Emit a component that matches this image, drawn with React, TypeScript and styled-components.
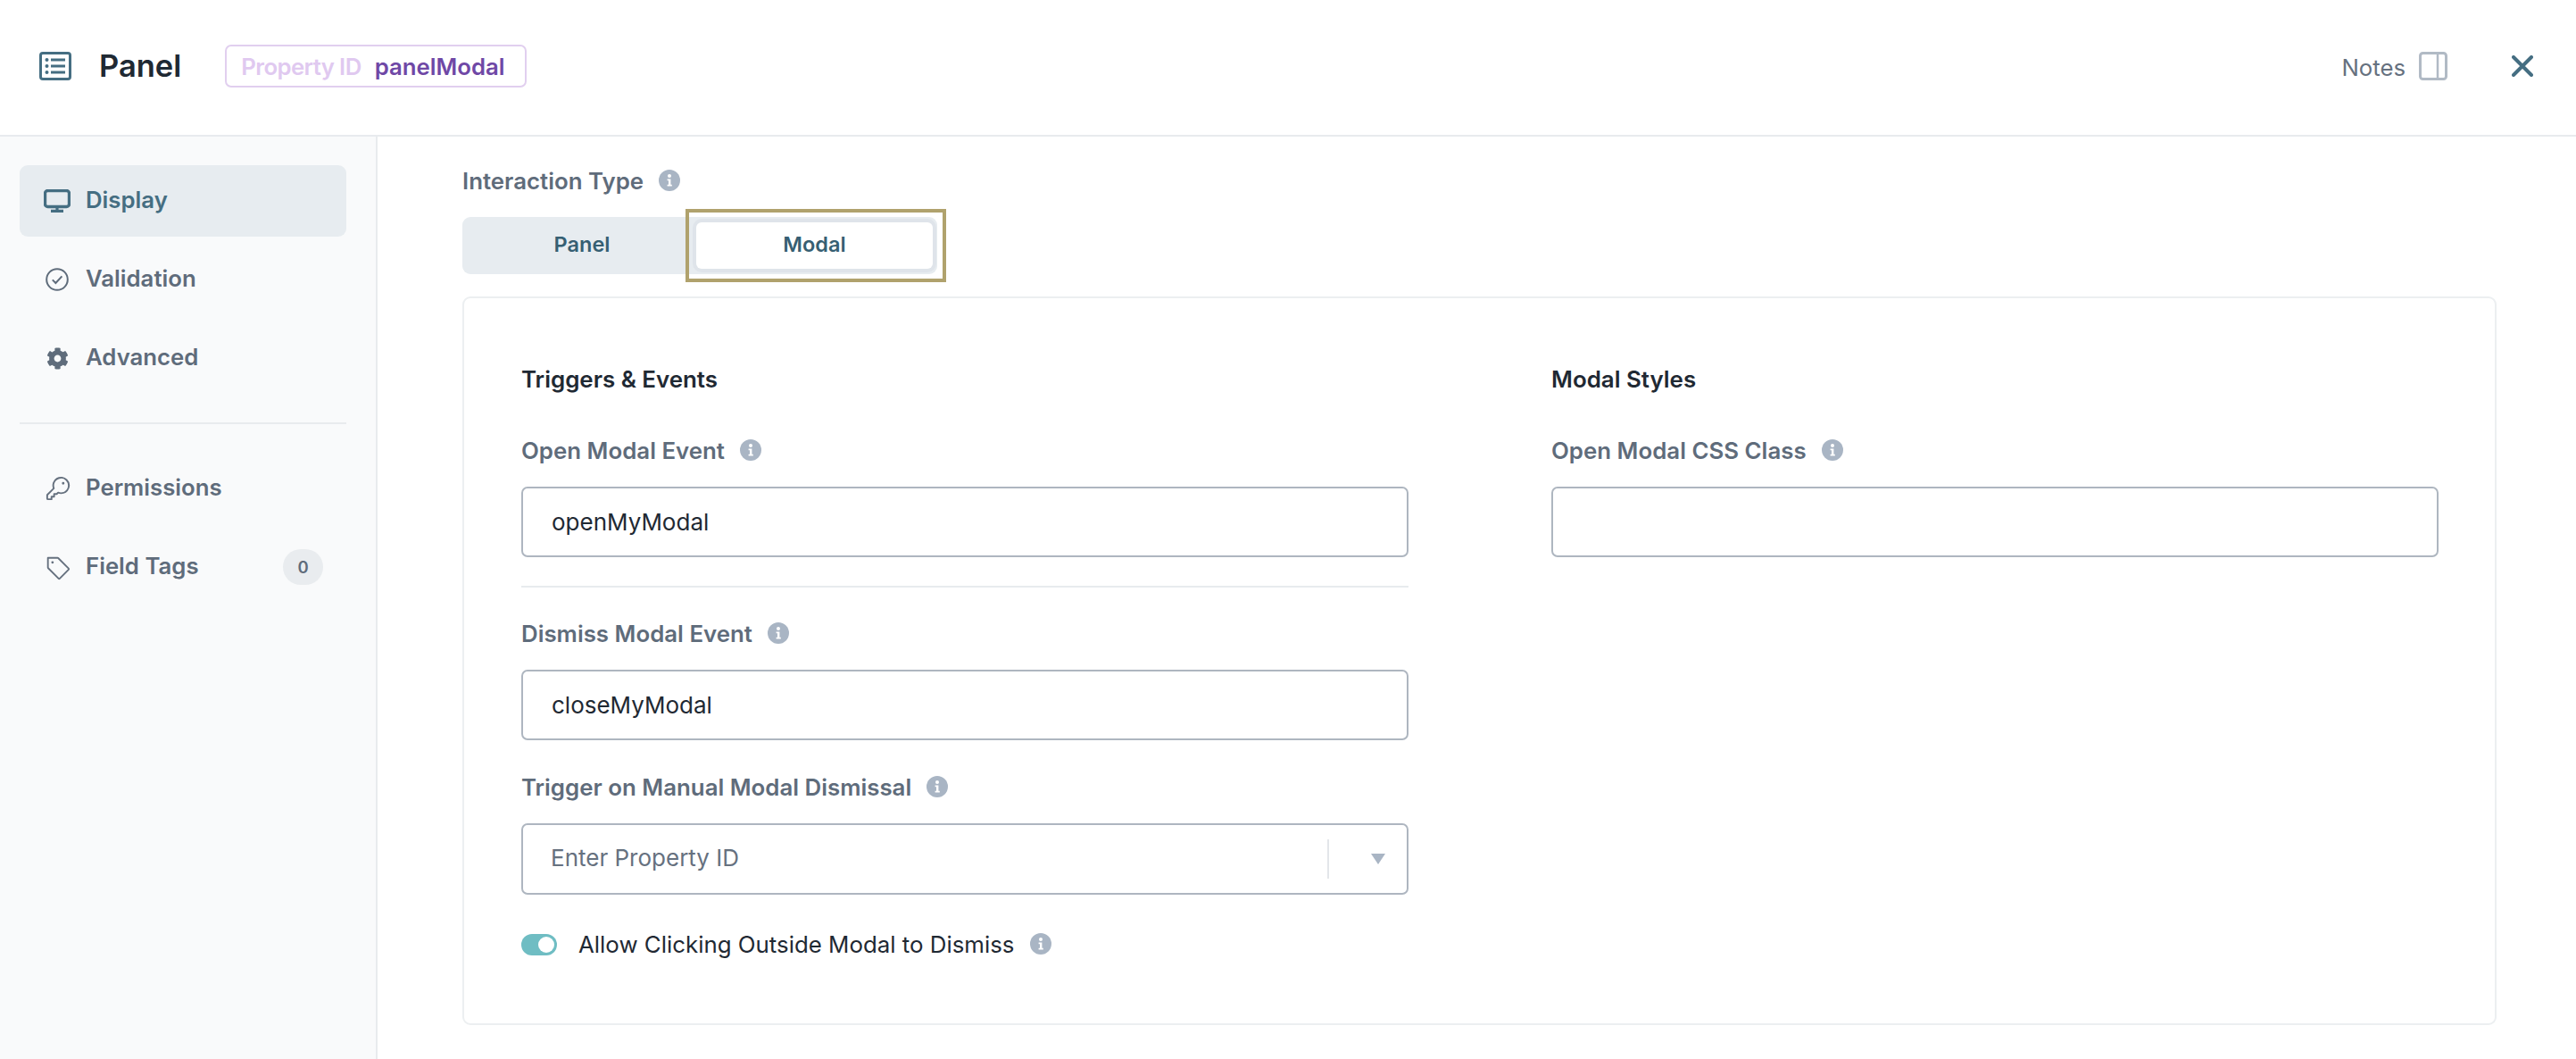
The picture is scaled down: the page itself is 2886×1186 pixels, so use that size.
import React from 'react'
import styled, { createGlobalStyle } from 'styled-components'
import { FaCog } from 'react-icons/fa'
import { PiKey, PiTag } from 'react-icons/pi'

const GlobalStyle = createGlobalStyle`
  html, body {
    margin: 0;
    padding: 0;
    background: #fff;
  }
  * {
    box-sizing: border-box;
  }
  body {
    font-family: Inter, "Liberation Sans", sans-serif;
    color: #1f2933;
  }
`

const Page = styled.div`
  width: 2886px;
  height: 1186px;
  overflow: hidden;
  display: flex;
  flex-direction: column;
`

const Header = styled.header`
  height: 153px;
  flex: none;
  display: flex;
  align-items: center;
  padding: 0 48px 3px 44px;
  border-bottom: 2px solid #e8ebee;
`

const Title = styled.h1`
  margin: 0 49px 0 31px;
  font-size: 34.5px;
  line-height: 44px;
  font-weight: 600;
  color: #1f2933;
`

const PropertyBadge = styled.div`
  height: 48px;
  width: 338px;
  display: flex;
  align-items: center;
  gap: 15px;
  padding: 0 0 0 16px;
  border: 2.5px solid #e1cfef;
  border-radius: 7px;
  font-size: 25.76px;
  font-weight: 600;
  white-space: nowrap;
`

const BadgeKey = styled.span`
  color: #e0c9f0;
  letter-spacing: -0.6px;
`

const BadgeValue = styled.span`
  color: #6f48a6;
`

const HeaderRight = styled.div`
  margin-left: auto;
  display: flex;
  align-items: center;
`

const NotesLabel = styled.span`
  font-size: 25.76px;
  color: #66717f;
  margin: 3px 15px 0 0;
`

const CloseButton = styled.div`
  margin-left: 72px;
  display: flex;
`

const Body = styled.div`
  flex: 1;
  display: flex;
  min-height: 0;
`

const Sidebar = styled.nav`
  width: 423px;
  flex: none;
  padding: 32px 33px 0 22px;
  background: #f9fafb;
  border-right: 2px solid #e8ebee;
  display: flex;
  flex-direction: column;
  gap: 8px;
`

const NavItem = styled.div<{ $active?: boolean }>`
  height: 80px;
  display: flex;
  align-items: center;
  gap: 16px;
  padding: 0 26px;
  border-radius: 9px;
  background: ${(p) => (p.$active ? '#e7ecf0' : 'transparent')};
  color: ${(p) => (p.$active ? '#456e82' : '#5f6c7b')};
  font-size: 25.76px;
  font-weight: 600;
`

const NavIcon = styled.span`
  width: 32px;
  height: 32px;
  flex: none;
  display: flex;
  align-items: center;
  justify-content: center;
`

const LineIcon = styled(NavIcon)`
  color: #66717f;
`

const NavText = styled.span`
  padding-bottom: 3px;
`

const CountBadge = styled.span`
  margin-left: auto;
  width: 45px;
  height: 40px;
  border-radius: 20px;
  background: #e9ecef;
  display: flex;
  align-items: center;
  justify-content: center;
  font-size: 18.5px;
  font-weight: 600;
`

const NavDivider = styled.hr`
  width: 100%;
  height: 2px;
  margin: 24px 0;
  border: 0;
  background: #e8ebee;
`

const Main = styled.main`
  flex: 1;
  min-width: 0;
  padding: 32px 89px 0 95px;
`

const LabelRow = styled.div<{ $dark?: boolean; $spaced?: boolean }>`
  height: 36px;
  margin-top: ${(p) => (p.$spaced ? '35px' : '0')};
  padding-bottom: 2px;
  display: flex;
  align-items: center;
  gap: 17px;
  font-size: 25.85px;
  font-weight: ${(p) => (p.$dark ? 400 : 600)};
  color: ${(p) => (p.$dark ? '#1f2933' : '#5f6c7b')};
`

const Tabs = styled.div`
  position: relative;
  width: 532px;
  height: 64px;
  margin: 22px 0 25px;
  padding: 6px 5px 6px 6px;
  display: flex;
  border-radius: 9px;
  background: #e7ecf0;
`

const Tab = styled.div<{ $active?: boolean }>`
  flex: none;
  width: ${(p) => (p.$active ? '265px' : '256px')};
  padding-bottom: 3px;
  display: flex;
  align-items: center;
  justify-content: center;
  border-radius: 6px;
  font-size: 23.5px;
  font-weight: 600;
  color: #365f73;
  background: ${(p) => (p.$active ? '#fff' : 'transparent')};
  box-shadow: ${(p) => (p.$active ? '0 0 0 4px #dfe4ea' : 'none')};
`

const Highlight = styled.div`
  position: absolute;
  top: -9px;
  left: 250px;
  width: 292px;
  height: 82px;
  border: 4px solid #b0a26d;
  pointer-events: none;
`

const Card = styled.section`
  height: 816px;
  padding: 73px 0 0 64px;
  border: 2px solid #eceff1;
  border-radius: 9px;
  display: grid;
  grid-template-columns: 994px 994px;
  column-gap: 160px;
  align-content: start;
  align-items: start;
`

const Column = styled.div`
  display: flex;
  flex-direction: column;
`

const SectionTitle = styled.h2`
  margin: 0 0 44px;
  font-size: 25.9px;
  line-height: 36px;
  font-weight: 600;
  color: #1f2933;
`

const TextInput = styled.input`
  display: block;
  width: 100%;
  height: 79px;
  margin-top: 22px;
  padding: 0 32px;
  border: 2px solid #aeb6c0;
  border-radius: 7px;
  background: #fff;
  font-family: inherit;
  font-size: 26px;
  color: #1f2933;
  outline: none;
`

const FieldDivider = styled.hr`
  width: 100%;
  height: 2px;
  margin: 32px 0 34px;
  border: 0;
  background: #e8ebee;
`

const SelectBox = styled.div`
  height: 80px;
  margin-top: 22px;
  display: flex;
  align-items: center;
  padding-left: 31px;
  border: 2px solid #aeb6c0;
  border-radius: 7px;
  font-size: 26px;
  color: #66717f;
`

const SelectText = styled.span`
  padding-bottom: 3px;
`

const SelectControl = styled.div`
  margin-left: auto;
  width: 89px;
  height: 44px;
  flex: none;
  display: flex;
  align-items: center;
  padding-left: 47px;
  border-left: 2px solid #e3e6ea;
`

const Caret = styled.span`
  width: 0;
  height: 0;
  border-left: 8px solid transparent;
  border-right: 8px solid transparent;
  border-top: 12px solid #a9b5c4;
`

const ToggleRow = styled.div`
  margin-top: 38px;
  display: flex;
  align-items: center;
  gap: 24px;
`

const Toggle = styled.span`
  width: 40px;
  height: 24px;
  flex: none;
  padding: 3px;
  display: flex;
  justify-content: flex-end;
  border-radius: 12px;
  background: #6fbdc3;
`

const ToggleKnob = styled.span`
  width: 18px;
  height: 18px;
  border-radius: 50%;
  background: #fff;
`

const InfoDot = styled.svg`
  width: 24px;
  height: 24px;
  flex: none;
`

const Info = () => (
  <InfoDot viewBox="0 0 24 24">
    <circle cx="12" cy="12" r="12" fill="#a9b5c4" />
    <circle cx="12" cy="7" r="2" fill="#fff" />
    <path d="M9.6 10.4h3.8v6.4h1.4v1.8H9.6v-1.8h1.4v-4.6H9.6z" fill="#fff" />
  </InfoDot>
)

const ListIcon = () => (
  <svg width="36" height="32" viewBox="0 0 36 32" fill="none">
    <rect x="1.5" y="1.5" width="33" height="29" rx="2.5" stroke="#456e82" strokeWidth="3" />
    <circle cx="8.5" cy="9" r="2" fill="#456e82" />
    <circle cx="8.5" cy="16" r="2" fill="#456e82" />
    <circle cx="8.5" cy="23" r="2" fill="#456e82" />
    <path d="M13 9h16M13 16h16M13 23h16" stroke="#456e82" strokeWidth="3" />
  </svg>
)

const PanelToggleIcon = () => (
  <svg width="32" height="32" viewBox="0 0 32 32" fill="none">
    <rect x="1.5" y="1.5" width="29" height="29" rx="3" stroke="#b1bac5" strokeWidth="3" />
    <path d="M21 2v28" stroke="#b1bac5" strokeWidth="2.5" />
  </svg>
)

const CloseIcon = () => (
  <svg width="24" height="24" viewBox="0 0 24 24" fill="none">
    <path d="M2 2l20 20M22 2L2 22" stroke="#456e82" strokeWidth="4" strokeLinecap="round" />
  </svg>
)

const MonitorIcon = () => (
  <svg width="30" height="26" viewBox="0 0 30 26" fill="none">
    <rect x="1.5" y="1.5" width="27" height="18" rx="3" stroke="#456e82" strokeWidth="3.4" />
    <path d="M15 20v4M8 24.4h14" stroke="#456e82" strokeWidth="3.2" />
  </svg>
)

const CheckCircleIcon = () => (
  <svg width="26" height="26" viewBox="0 0 26 26" fill="none">
    <circle cx="13" cy="13" r="11.8" stroke="#5f6c7b" strokeWidth="2" />
    <path d="M7.8 13.4l3.6 3.6 7-7.6" stroke="#5f6c7b" strokeWidth="2" />
  </svg>
)

export default function App() {
  return (
    <Page>
      <GlobalStyle />
      <Header>
        <ListIcon />
        <Title>Panel</Title>
        <PropertyBadge>
          <BadgeKey>Property ID</BadgeKey>
          <BadgeValue>panelModal</BadgeValue>
        </PropertyBadge>
        <HeaderRight>
          <NotesLabel>Notes</NotesLabel>
          <PanelToggleIcon />
          <CloseButton>
            <CloseIcon />
          </CloseButton>
        </HeaderRight>
      </Header>
      <Body>
        <Sidebar>
          <NavItem $active>
            <NavIcon>
              <MonitorIcon />
            </NavIcon>
            <NavText>Display</NavText>
          </NavItem>
          <NavItem>
            <NavIcon>
              <CheckCircleIcon />
            </NavIcon>
            <NavText>Validation</NavText>
          </NavItem>
          <NavItem>
            <NavIcon>
              <FaCog size={25} />
            </NavIcon>
            <NavText>Advanced</NavText>
          </NavItem>
          <NavDivider />
          <NavItem>
            <LineIcon>
              <PiKey size={31} />
            </LineIcon>
            <NavText>Permissions</NavText>
          </NavItem>
          <NavItem>
            <LineIcon>
              <PiTag size={30} />
            </LineIcon>
            <NavText>Field Tags</NavText>
            <CountBadge>0</CountBadge>
          </NavItem>
        </Sidebar>
        <Main>
          <LabelRow>
            Interaction Type <Info />
          </LabelRow>
          <Tabs>
            <Tab>Panel</Tab>
            <Tab $active>Modal</Tab>
            <Highlight />
          </Tabs>
          <Card>
            <Column>
              <SectionTitle>Triggers &amp; Events</SectionTitle>
              <LabelRow>
                Open Modal Event <Info />
              </LabelRow>
              <TextInput readOnly value="openMyModal" />
              <FieldDivider />
              <LabelRow>
                Dismiss Modal Event <Info />
              </LabelRow>
              <TextInput readOnly value="closeMyModal" />
              <LabelRow $spaced>
                Trigger on Manual Modal Dismissal <Info />
              </LabelRow>
              <SelectBox>
                <SelectText>Enter Property ID</SelectText>
                <SelectControl>
                  <Caret />
                </SelectControl>
              </SelectBox>
              <ToggleRow>
                <Toggle>
                  <ToggleKnob />
                </Toggle>
                <LabelRow $dark>
                  Allow Clicking Outside Modal to Dismiss <Info />
                </LabelRow>
              </ToggleRow>
            </Column>
            <Column>
              <SectionTitle>Modal Styles</SectionTitle>
              <LabelRow>
                Open Modal CSS Class <Info />
              </LabelRow>
              <TextInput readOnly value="" />
            </Column>
          </Card>
        </Main>
      </Body>
    </Page>
  )
}
